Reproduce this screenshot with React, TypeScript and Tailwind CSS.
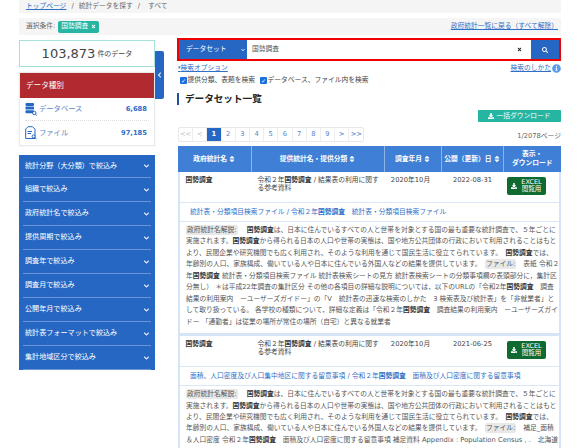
import React from "react";
import { FaChevronDown, FaChevronLeft, FaSearch, FaTimes, FaInfoCircle, FaDownload, FaSort } from "react-icons/fa";

const FONT = { fontFamily: '"DejaVu Sans","Noto Sans CJK JP",sans-serif' };

const B = ({ children }: { children: React.ReactNode }) => <b className="font-bold text-[#333]">{children}</b>;
const Tag = ({ children }: { children: React.ReactNode }) => (
  <span className="bg-[#e8e8e8] rounded-[2px] px-[1px] py-[1px] mr-[7px]">{children}</span>
);

const filters = [
  "統計分野（大分類）で絞込み",
  "組織で絞込み",
  "政府統計名で絞込み",
  "提供周期で絞込み",
  "調査年で絞込み",
  "調査月で絞込み",
  "公開年月で絞込み",
  "統計表フォーマットで絞込み",
  "集計地域区分で絞込み",
];

function DbIcon() {
  return (
    <svg width="12" height="13" viewBox="0 0 12 13" className="text-[#2767c4]">
      <rect x="0.5" y="0" width="8.5" height="3" rx="1" fill="currentColor" />
      <rect x="0.5" y="3.6" width="8.5" height="3" rx="0.6" fill="currentColor" />
      <rect x="0.5" y="7.2" width="8.5" height="3" rx="1" fill="currentColor" />
      <circle cx="9.3" cy="10" r="1.7" fill="#fff" stroke="currentColor" strokeWidth="1" />
      <path d="M10.5 11.2 L12 12.7" stroke="currentColor" strokeWidth="1" />
    </svg>
  );
}
function FileIcon() {
  return (
    <svg width="12" height="14" viewBox="0 0 12 14" fill="none" stroke="#2767c4" strokeWidth="1">
      <path d="M3 0.7 H7.5 L10 3.2 V12.5 H0.7 V3 Z" />
      <path d="M2.5 5.5H7M2.5 7.5H6" />
      <circle cx="8.6" cy="10.4" r="1.5" fill="#fff" />
      <path d="M9.8 11.6 L11.4 13.2" />
    </svg>
  );
}

function Excel() {
  return (
    <div className="w-[39px] h-[18px] bg-[#0f6a32] rounded-[2px] flex items-center text-white">
      <FaDownload className="w-[6px] h-[6px] ml-[4px] shrink-0" />
      <div className="flex-1 text-center text-[6.5px] leading-[7.5px] pl-[1px]">EXCEL<br />閲覧用</div>
    </div>
  );
}

function Row({ updated, link, lines }: { updated: string; link: React.ReactNode; lines: React.ReactNode[] }) {
  return (
    <div className="border-x-[2px] border-[#d6e4f7]">
      <div className="flex h-[30px] text-[6.75px] leading-[7.5px] text-[#444]">
        <div className="w-[71.5px] pl-[5.5px] pt-[5px] font-bold text-[#333]">国勢調査</div>
        <div className="w-[133px] pl-[6px] pt-[5px] pr-[2px]">令和２年<B>国勢調査</B> / 結果表の利用に関する参考資料</div>
        <div className="w-[57px] text-center pt-[5px] pr-[5px]">2020年10月</div>
        <div className="w-[62px] text-center pt-[5px]">{updated}</div>
        <div className="flex-1 pt-[5px] pl-[3px]"><Excel /></div>
      </div>
      <div className="h-[20px] border-y border-[#dbe6f6] pl-[10px] flex items-center text-[6.75px] text-[#2f6fc6] whitespace-nowrap overflow-hidden">{link}</div>
      <div className="pl-[6px] pt-[3px] pb-[5px] text-[6.75px] leading-[11.45px] text-[#555] whitespace-nowrap overflow-hidden">
        {lines.map((l, i) => <div key={i}>{l}</div>)}
      </div>
    </div>
  );
}

export default function App() {
  return (
    <div style={FONT} className="w-[581px] h-[448px] overflow-hidden bg-white text-[#555] text-[6.75px] relative">
      <div className="ml-[19px] w-[542px] h-[13px] bg-[#f5f5f5] pl-[7px] flex items-center gap-[5px] text-[#666]">
        <span className="text-[#2f6fc6] underline">トップページ</span><span>/</span><span>統計データを探す</span><span>/</span><span className="ml-[3px]">すべて</span>
      </div>
      <div className="ml-[19px] w-[542px] h-[17px] mt-[5px] bg-[#f5f5f5] pl-[7px] pr-[3px] flex items-center">
        <span className="text-[#666]">選択条件:</span>
        <span className="ml-[3px] h-[12px] w-[41px] rounded-[2px] bg-[#25b5a2] text-white flex items-center pl-[3px] gap-[3px]">国勢調査<FaTimes className="w-[5px] h-[5px]" /></span>
        <span className="ml-auto text-[#2f6fc6] underline">政府統計一覧に戻る（すべて解除）</span>
      </div>

      <div className="flex mt-[3px] ml-[19px]">
        <div className="w-[136px] pt-[2px] shrink-0">
          <div className="h-[27px] border border-[#a5e3da] flex items-center justify-center gap-[2px] text-[#444]">
            <span className="text-[13px]">103,873</span><span className="text-[7px] pt-[2px]">件のデータ</span>
          </div>
          <div className="mt-[5px] border border-[#eaeaea] shadow-[0_0_1px_#ddd]">
            <div className="h-[25px] bg-[#b02a30] text-white flex items-center pl-[6px] text-[7.6px]">データ種別</div>
            <div className="px-[5px]">
              <div className="h-[23px] flex items-center border-b border-dotted border-[#ddd]">
                <DbIcon />
                <span className="ml-[2px] text-[#5a86c9] text-[7.3px]">データベース</span>
                <b className="ml-auto text-[#2f6fc6] pr-[2px]">6,688</b>
              </div>
              <div className="h-[24px] flex items-center">
                <FileIcon />
                <span className="ml-[2px] text-[#5a86c9] text-[7.3px]">ファイル</span>
                <b className="ml-auto text-[#2f6fc6] pr-[2px]">97,185</b>
              </div>
            </div>
          </div>
          <div className="mt-[9px] bg-[#2767c4] px-[4px]">
            {filters.map((f) => (
              <div key={f} className="h-[24px] first:h-[23px] border-b border-[#6a94d8] flex items-center justify-between text-white pl-[2px] pr-[1px] text-[7.1px]">
                <span>{f}</span>
                <FaChevronDown className="w-[7px] h-[6px]" />
              </div>
            ))}
          </div>
        </div>

        <div className="w-[10px] shrink-0 pt-[13px]">
          <div className="w-[9px] h-[48px] bg-[#2767c4] rounded-r-[2px] flex items-center justify-center text-white">
            <FaChevronLeft className="w-[5px] h-[6px]" />
          </div>
        </div>

        <div className="ml-[12px] w-[384px] shrink-0">
          <div className="h-[23px] border-[2px] border-[#f00000] flex items-stretch">
            <div className="w-[68px] bg-[#2767c4] text-white flex items-center pl-[7px] justify-between pr-[2px]">
              データセット<FaChevronDown className="w-[4px] h-[4px]" />
            </div>
            <div className="flex-1 flex items-center pl-[5px] pr-[9px] text-[#555]">
              国勢調査<FaTimes className="ml-auto w-[5px] h-[5px] text-[#222]" />
            </div>
            <div className="w-[28px] bg-[#2767c4] text-white flex items-center justify-center"><FaSearch className="w-[6px] h-[6px]" /></div>
          </div>

          <div className="h-[13px] flex items-start justify-between mt-[1px] pl-[1px]">
            <span className="text-[#2f6fc6] underline pt-[1px]"><span className="text-[5px] align-[1px]">▾</span>検索オプション</span>
            <span className="flex items-center gap-[1px] text-[#2f6fc6] pt-[1px]"><span className="underline">検索のしかた</span><FaInfoCircle className="w-[9px] h-[9px] text-[#5b9bea]" /></span>
          </div>
          <div className="h-[10px] flex items-center text-[#444]">
            <span className="w-[7px] h-[7px] bg-[#1a6fe0] rounded-[1px] text-white text-[6px] leading-[7px] text-center ml-[3px] mr-[0.5px]">✓</span>提供分類、表題を検索
            <span className="w-[7px] h-[7px] bg-[#1a6fe0] rounded-[1px] text-white text-[6px] leading-[7px] text-center ml-[5px] mr-[0.5px]">✓</span>データベース、ファイル内を検索
          </div>
          <div className="mt-[8px] h-[12px] border-l-[2px] border-[#1f4e9c] pl-[6px] flex items-center text-[9.6px] font-bold text-[#222]">データセット一覧</div>

          <div className="flex justify-end mt-[5px]">
            <div className="w-[83px] h-[12px] bg-[#25b5a2] rounded-[1px] text-white flex items-center justify-center gap-[2px]"><FaDownload className="w-[6px] h-[6px]" />一括ダウンロード</div>
          </div>

          <div className="ml-[1px]">
            <div className="flex items-start justify-between h-[19px] mt-[5px]">
              <div className="flex border border-[#e8e8e8] rounded-[2px] h-[15px] text-[#5a86c9]">
                {["<<", "<", "1", "2", "3", "4", "5", "6", "7", "8", "9", ">", ">>"].map((p, i) => (
                  <div key={i} className={`w-[14.2px] flex items-center justify-center border-r border-[#eee] last:border-r-0 ${p === "1" ? "bg-[#2767c4] text-white font-bold" : i < 2 ? "text-[#ccc]" : ""}`}>{p}</div>
                ))}
              </div>
              <span className="mt-[4px] text-[#666]">1/2078ページ</span>
            </div>

            <div className="flex h-[26px] bg-[#3f80d6] text-white font-bold text-[6.75px]">
              {[["政府統計名", 73.5], ["提供統計名・提供分類", 133], ["調査年月", 57], ["公開（更新）日", 62]].map(([t, w]) => (
                <div key={t as string} style={{ width: w as number }} className="border-r border-[#8db3e8] flex items-center justify-center gap-[2px] whitespace-nowrap">{t}<FaSort className="w-[6px] h-[8px]" /></div>
              ))}
              <div className="flex-1 flex items-center justify-center text-center leading-[9px]">表示・<br />ダウンロード</div>
            </div>

            <Row
              updated="2022-08-31"
              link={<>統計表・分類項目検索ファイル / 令和２年<b>国勢調査</b>　統計表・分類項目検索ファイル</>}
              lines={[
                <><Tag>政府統計名解説:</Tag> <B>国勢調査</B>は、日本に住んでいるすべての人と世帯を対象とする国の最も重要な統計調査で、５年ごとに</>,
                <>実施されます。<B>国勢調査</B>から得られる日本の人口や世帯の実態は、国や地方公共団体の行政において利用されることはもと</>,
                <>より、民間企業や研究機関でも広く利用され、そのような利用を通じて国民生活に役立てられています。　<B>国勢調査</B>では、</>,
                <>年齢別の人口、家族構成、働いている人や日本に住んでいる外国人などの結果を提供しています。　<Tag>ファイル:</Tag>表紙 令和２</>,
                <>年<B>国勢調査</B> 統計表・分類項目検索ファイル 統計表検索シートの見方 統計表検索シートの分類事項欄の表頭部分に，集計区</>,
                <>分無し） ＊は平成22年調査の集計区分 その他の各項目の詳細な説明については，以下のURLの「令和2年<B>国勢調査</B>　調査</>,
                <>結果の利用案内　ーユーザーズガイドー」の「V　統計表の迅速な検索のしかた　3 検索表及び統計表」を「非就業者」と</>,
                <>して取り扱っている。 各学校の種類について，詳細な定義は「令和２年<B>国勢調査</B>　調査結果の利用案内　ーユーザーズガイ</>,
                <>ドー 「通勤者」は従業の場所が常住の場所（自宅）と異なる就業者</>,
              ]}
            />
            <div className="h-[3px] bg-[#d6e4f7]" />
            <Row
              updated="2021-06-25"
              link={<>面積、人口密度及び人口集中地区に関する留意事項 / 令和２年<b>国勢調査</b>　面積及び人口密度に関する留意事項</>}
              lines={[
                <><Tag>政府統計名解説:</Tag> <B>国勢調査</B>は、日本に住んでいるすべての人と世帯を対象とする国の最も重要な統計調査で、５年ごとに</>,
                <>実施されます。<B>国勢調査</B>から得られる日本の人口や世帯の実態は、国や地方公共団体の行政において利用されることはもと</>,
                <>より、民間企業や研究機関でも広く利用され、そのような利用を通じて国民生活に役立てられています。　<B>国勢調査</B>では、</>,
                <>年齢別の人口、家族構成、働いている人や日本に住んでいる外国人などの結果を提供しています。　<Tag>ファイル:</Tag>補足_面積</>,
                <>＆人口密度 令和２年<B>国勢調査</B>　面積及び人口密度に関する留意事項 補足資料 Appendix : Population Census , .　北海道</>,
              ]}
            />
          </div>
        </div>
      </div>
    </div>
  );
}
